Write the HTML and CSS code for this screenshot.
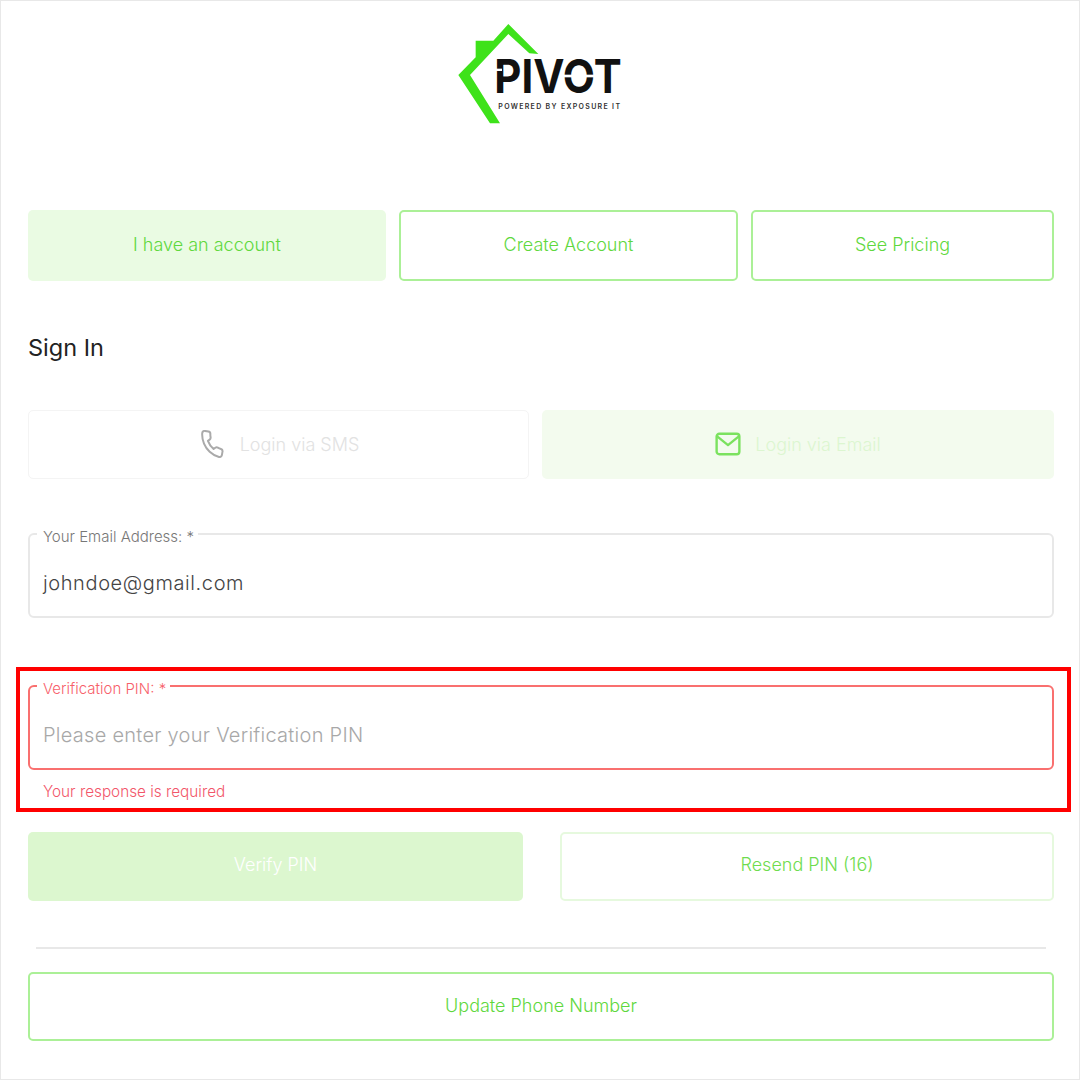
FILE: index.html
```html
<!DOCTYPE html>
<html lang="en">
<head>
    <meta charset="UTF-8">
    <meta name="viewport" content="width=device-width, initial-scale=1.0">
    <title>Pivot - Sign In</title>
    <link rel="stylesheet" href="styles.css">
</head>
<body>
    <div class="page">
        <div class="logo">
            <svg class="logo-mark" viewBox="0 0 600 375" width="200" height="125">
                <polygon class="logo-house" points="55,195 107,142 107,92 160,92 205,42 295,132 268,130 205,72 90,195 180,340 150,340"/>
                <text class="logo-name" x="163" y="250" textLength="382" lengthAdjust="spacingAndGlyphs">PIVOT</text>
                <rect class="logo-cut" x="160" y="176" width="26" height="7"/>
                <rect class="logo-cut" x="362" y="194" width="112" height="8"/>
                <text class="logo-tag" x="175" y="296" textLength="365">POWERED BY EXPOSURE IT</text>
            </svg>
        </div>

        <div class="tabs">
            <button class="btn btn-soft">I have an account</button>
            <button class="btn btn-outline">Create Account</button>
            <button class="btn btn-outline">See Pricing</button>
        </div>

        <h1 class="title">Sign In</h1>

        <div class="login-methods">
            <button class="method method-sms">
                <svg class="method-icon" viewBox="0 0 24 24" width="28" height="28">
                    <path transform="rotate(10 12 12)" d="M22 16.92v3a2 2 0 0 1-2.18 2 19.79 19.79 0 0 1-8.63-3.07 19.5 19.5 0 0 1-6-6 19.79 19.79 0 0 1-3.07-8.67A2 2 0 0 1 4.11 2h3a2 2 0 0 1 2 1.72 12.84 12.84 0 0 0 .7 2.81 2 2 0 0 1-.45 2.11L8.09 9.91a16 16 0 0 0 6 6l1.27-1.27a2 2 0 0 1 2.11-.45 12.84 12.84 0 0 0 2.81.7A2 2 0 0 1 22 16.92z"/>
                </svg>
                Login via SMS
            </button>
            <button class="method method-email">
                <svg class="method-icon" viewBox="0 0 24 24" width="26" height="26">
                    <rect x="1.5" y="2.5" width="21" height="19" rx="2.5"/>
                    <path d="M2 5l10 8 10-8"/>
                </svg>
                Login via Email
            </button>
        </div>

        <fieldset class="field">
            <legend>Your Email Address: *</legend>
            <div class="field-value field-email">johndoe@gmail.com</div>
        </fieldset>

        <div class="highlight">
            <fieldset class="field field-error">
                <legend>Verification PIN: *</legend>
                <div class="field-value field-placeholder">Please enter your Verification PIN</div>
            </fieldset>
            <div class="error-text">Your response is required</div>
        </div>

        <div class="actions">
            <button class="btn btn-disabled">Verify PIN</button>
            <button class="btn btn-outline-light">Resend PIN (16)</button>
        </div>

        <hr class="divider">

        <button class="btn btn-outline btn-wide">Update Phone Number</button>
    </div>
</body>
</html>
```

FILE: styles.css
```css
* {
    box-sizing: border-box;
}

body {
    margin: 0;
    background-color: white;
    font-family: Inter, "Open Sans", sans-serif;
}

.page {
    width: 1080px;
    height: 1080px;
    padding: 9px 25px 0 27px;
    border: 1px solid #e8e8e8;
    background-color: white;
}

/* logo */
.logo {
    display: flex;
    justify-content: center;
    height: 125px;
    padding-right: 2px;
}

.logo-mark {
    display: block;
}

.logo-house {
    fill: #3ee21a;
}

.logo-name {
    font-family: Inter, sans-serif;
    font-size: 140px;
    font-weight: 700;
    fill: #111;
}

.logo-cut {
    fill: white;
}

.logo-tag {
    font-family: Inter, sans-serif;
    font-size: 21px;
    font-weight: 600;
    fill: #333;
}

/* buttons */
.btn {
    height: 71px;
    padding: 0 0 3px;
    border-radius: 5px;
    font-family: inherit;
    font-size: 18px;
    font-weight: 300;
    background-color: white;
}

.btn-soft {
    border: none;
    background-color: #eafbe3;
    color: #5fd83e;
}

.btn-outline {
    border: 2px solid #abf097;
    color: #5fd83e;
}

.btn-outline-light {
    border: 2px solid #e6f9de;
    color: #6edc4e;
}

.btn-disabled {
    border: none;
    background-color: #dcf7cf;
    color: white;
}

.btn-wide {
    display: block;
    width: 100%;
    height: 69px;
    margin-top: 23px;
}

.tabs {
    display: grid;
    grid-template-columns: 358px 339px 1fr;
    gap: 13px;
    margin-top: 75px;
}

.title {
    margin: 52px 0 0;
    font-size: 23.5px;
    line-height: 30px;
    font-weight: 400;
    color: #222;
}

/* sms / email switch */
.login-methods {
    display: grid;
    grid-template-columns: 501px 1fr;
    gap: 13px;
    margin-top: 47px;
}

.method {
    display: flex;
    align-items: center;
    justify-content: center;
    gap: 14px;
    height: 69px;
    padding: 0 0 1px;
    border-radius: 5px;
    font-family: inherit;
    font-size: 18px;
    font-weight: 300;
}

.method-icon {
    fill: none;
    stroke-linecap: round;
    stroke-linejoin: round;
}

.method-sms {
    border: 1px solid #f4f4f4;
    background-color: white;
    color: #e2e2e2;
}

.method-sms .method-icon {
    stroke: #aaa;
    stroke-width: 1.7;
}

.method-email {
    border: none;
    background-color: #f3fbee;
    color: #dcf6d0;
}

.method-email .method-icon {
    stroke: #7be25f;
    stroke-width: 2.2;
}

/* inputs */
.field {
    height: 96px;
    margin: 43px 0 0;
    padding: 0 7px;
    border: 2px solid #e8e8e8;
    border-radius: 6px;
}

.field legend {
    padding: 6px 4px 0 6px;
    font-size: 15px;
    line-height: 18px;
    font-weight: 300;
    color: #777;
}

.field-value {
    margin: 23px 0 0 6px;
    font-size: 20px;
    line-height: 28px;
    font-weight: 300;
    letter-spacing: 0.27px;
    color: #444;
}

.field-email {
    letter-spacing: 0.6px;
}

.field-placeholder {
    color: #a8a8a8;
}

.highlight {
    margin: 49px -17px 0 -12px;
    padding: 3px 13px 7px 8px;
    border: 4px solid #ff0000;
}

.field-error {
    margin-top: 0;
    border-color: #f9706f;
}

.field-error legend {
    color: #f7606a;
}

.error-text {
    margin-top: 13px;
    padding-left: 15px;
    font-size: 15.3px;
    line-height: 18px;
    font-weight: 300;
    color: #f2566a;
}

.actions {
    display: grid;
    grid-template-columns: 495px 1fr;
    gap: 37px;
    margin-top: 20px;
}

.actions .btn {
    height: 69px;
    padding-bottom: 4px;
}

.divider {
    height: 2px;
    margin: 46px 8px 0;
    border: none;
    background-color: #e8e8e8;
}
```
